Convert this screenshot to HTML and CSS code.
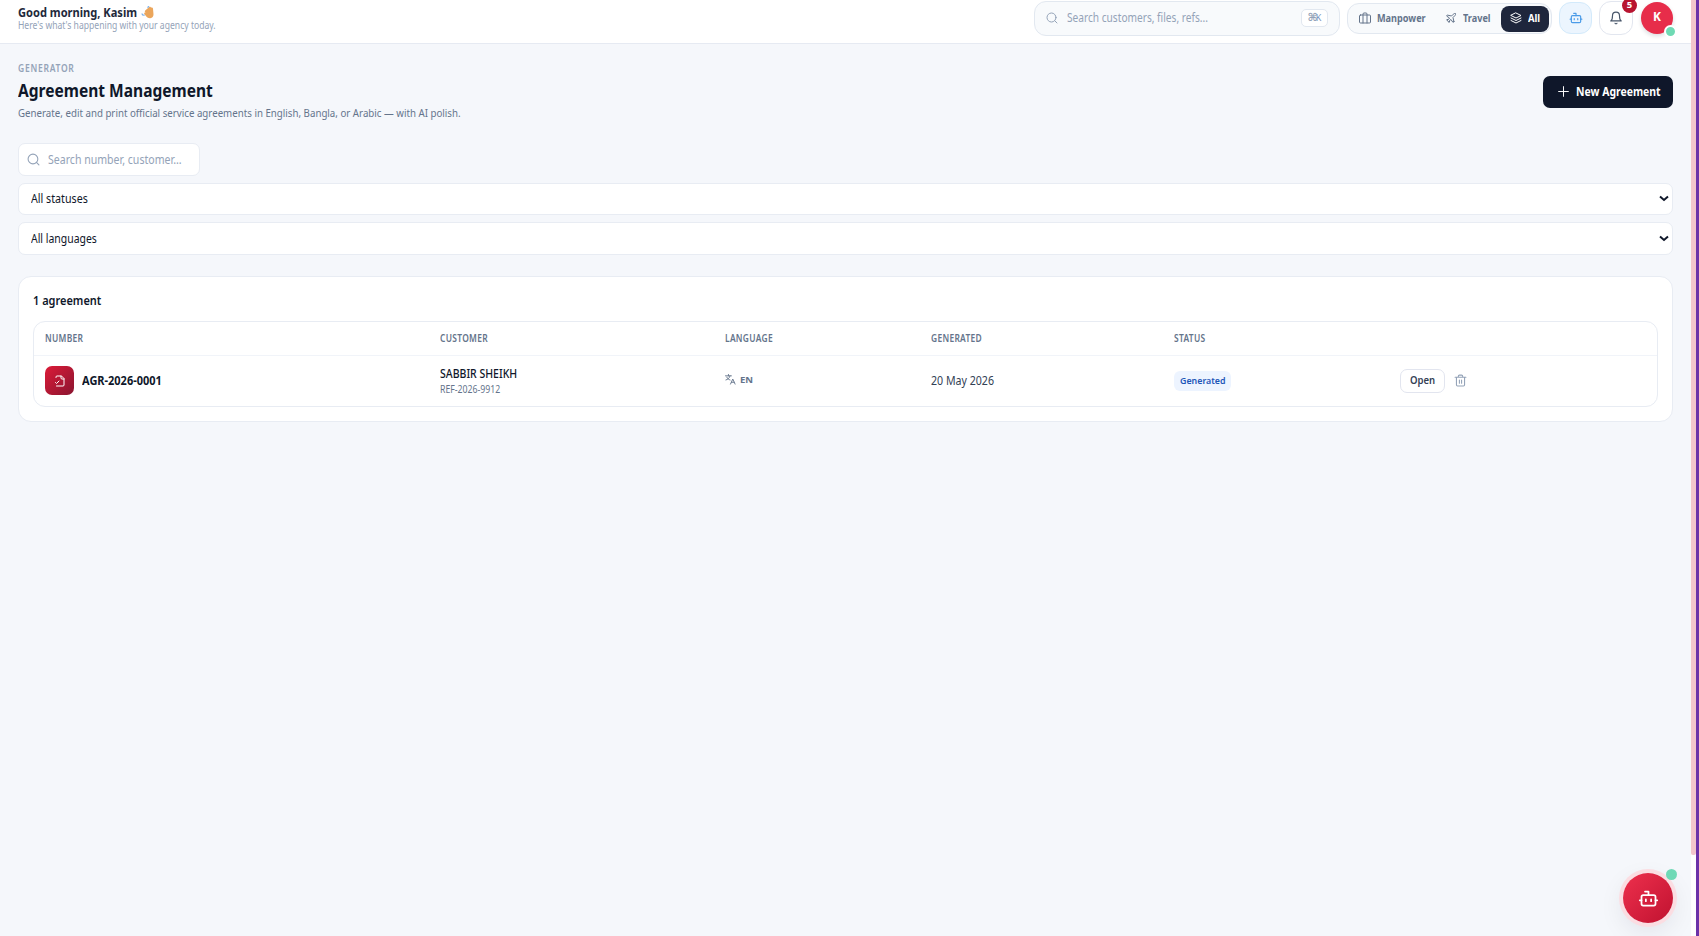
FILE: index.html
```html
<!DOCTYPE html>
<html lang="en">
<head>
<meta charset="utf-8">
<title>Agreement Management</title>
<link rel="stylesheet" href="styles.css">
</head>
<body>
<svg class="defs" width="0" height="0">
  <symbol id="search" viewBox="0 0 24 24"><circle cx="11" cy="11" r="9"/><path d="m22 22-4.500-4.500"/></symbol>
  <symbol id="bot" viewBox="0 0 24 24"><path d="M12 8V4H8"/><rect width="16" height="12" x="4" y="8" rx="2"/><path d="M2 14h2M20 14h2M15 13v2M9 13v2"/></symbol>
</svg>
<div class="app">
  <header class="topbar">
    <div class="greeting">
      <div class="hello"><span class="t hello-text">Good morning, Kasim</span>
        <svg class="wave" viewBox="0 0 13 13"><path d="M4.200 4.500 8.500.8q1.200-.5 1.400.8l1.200-.2q1 .2.9 1.400l.5 5.500q0 3.600-3.200 3.900-2.600.2-4-1.600L3.200 7.800q-.4-1 .6-1.200l.8.2-.9-1.200z" fill="#eba65c"/><path d="M6.500 1.500 8 .4M1 7.500q0 1.500 1.500 2M2.700 8.500l.8 1" stroke="#6fa8e8" stroke-width="1.200" fill="none"/></svg>
      </div>
      <div class="t sub">Here's what's happening with your agency today.</div>
    </div>
    <div class="tools">
      <div class="global-search">
        <svg class="icon"><use href="#search"/></svg>
        <span class="t gs-text">Search customers, files, refs...</span>
        <kbd><span>⌘</span><span class="kbd-k">K</span></kbd>
      </div>
      <div class="segments">
        <div class="seg seg-manpower"><svg class="icon" viewBox="0 0 24 24"><rect x="1" y="6" width="22" height="16" rx="2"/><path d="M8 22V4a2 2 0 0 1 2-2h4a2 2 0 0 1 2 2v18"/></svg><span class="t">Manpower</span></div>
        <div class="seg seg-travel"><svg class="icon" viewBox="0 0 24 24"><path d="M17.800 19.200 16 11l3.500-3.500C21 6 21.500 4 21 3c-1-.5-3 0-4.500 1.500L13 8 4.800 6.200c-.5-.1-.9.1-1.100.5l-.3.5c-.2.5-.1 1 .3 1.300L9 12l-2 3H4l-1 1 3 2 2 3 1-1v-3l3-2 3.500 5.300c.3.4.8.5 1.300.3l.5-.2c.4-.3.6-.7.5-1.200z"/></svg><span class="t">Travel</span></div>
        <div class="seg seg-all"><svg class="icon" viewBox="0 0 24 24"><path d="m12 2 10 5-10 5L2 7z"/><path d="m2 12 10 5 10-5M2 17l10 5 10-5"/></svg><span class="t">All</span></div>
      </div>
      <div class="tool bot"><svg class="icon"><use href="#bot"/></svg></div>
      <div class="tool bell"><svg class="icon" viewBox="0 0 24 24"><path d="M6 8a6 6 0 0 1 12 0c0 7 3 9 3 9H3s3-2 3-9M10.300 21a2 2 0 0 0 3.400 0"/></svg><span class="badge">5</span></div>
      <div class="avatar">K<span class="online"></span></div>
    </div>
  </header>
  <main class="content">
    <section class="page-head">
      <div>
        <div class="t eyebrow">GENERATOR</div>
        <h1 class="t">Agreement Management</h1>
        <p class="t desc">Generate, edit and print official service agreements in English, Bangla, or Arabic — with AI polish.</p>
      </div>
      <div class="new-btn"><svg class="icon" viewBox="0 0 24 24"><path d="M3 12h18M12 3v18"/></svg><span class="t">New Agreement</span></div>
    </section>
    <section class="filters">
      <div class="field search-field"><svg class="icon"><use href="#search"/></svg><span class="t placeholder">Search number, customer...</span></div>
      <div class="field select"><span class="t opt-status">All statuses</span><svg class="chev" viewBox="0 0 10 7"><path d="m1 1.500 4 3.500 4-3.500"/></svg></div>
      <div class="field select tall"><span class="t opt-lang">All languages</span><svg class="chev" viewBox="0 0 10 7"><path d="m1 1.500 4 3.500 4-3.500"/></svg></div>
    </section>
    <section class="card">
      <h2 class="t">1 agreement</h2>
      <div class="table">
        <div class="row head">
          <span class="t">NUMBER</span><span class="t">CUSTOMER</span><span class="t">LANGUAGE</span><span class="t">GENERATED</span><span class="t">STATUS</span><span></span>
        </div>
        <div class="row body">
          <div class="number"><span class="doc"><svg class="icon" viewBox="0 0 24 24"><path d="M4 5V4a2 2 0 0 1 2-2h9l5 5v13a2 2 0 0 1-2 2H5"/><path d="M14 2v4a2 2 0 0 0 2 2h4M3 15l2 2 5-5"/></svg></span><span class="t num-text">AGR-2026-0001</span></div>
          <div class="customer"><div class="t cust-name">SABBIR SHEIKH</div><div class="t cust-ref">REF-2026-9912</div></div>
          <div class="lang"><svg class="icon" viewBox="0 0 24 24"><path d="M1 4h13M7.500 1v3M11 4c-1 5-5 8-9 9M4 7c1 3 4 5 7 6M12 22l5-11 5 11M14 18h6"/></svg><span>EN</span></div>
          <div class="t date">20 May 2026</div>
          <div class="state"><span class="pill"><span class="t">Generated</span></span></div>
          <div class="actions"><span class="open"><span class="t">Open</span></span><svg class="icon trash" viewBox="0 0 24 24"><path d="M2 6h20M19.500 6v14a2 2 0 0 1-2 2h-11a2 2 0 0 1-2-2V6M8 6V4a2 2 0 0 1 2-2h4a2 2 0 0 1 2 2v2M10 11v6M14 11v6"/></svg></div>
        </div>
      </div>
    </section>
  </main>
  <div class="fab"><svg class="icon"><use href="#bot"/></svg><span class="fab-dot"></span></div>
</div>
<div class="scrollbar"><div class="thumb"></div></div>
<div class="edge"></div>
</body>
</html>
```
FILE: styles.css
```css
* { box-sizing: border-box; }
body { margin: 0; height: 936px; display: flex; overflow: hidden; background: #f5f7fb; color: #0f172a; font-family: "Noto Sans", "Open Sans", sans-serif; white-space: nowrap; }
.defs { position: absolute; }
/* Condensed text: --w is the horizontal scale of the run */
.t { display: block; transform: scaleX(var(--w, .87)); transform-origin: 0 50%; }
.icon { display: block; flex: none; fill: none; stroke: currentColor; stroke-width: 2; stroke-linecap: round; stroke-linejoin: round; }
.app { width: 1691px; height: 936px; position: relative; }
.scrollbar { width: 5px; background: #fff; }
.thumb { height: 855px; background: #f3c5cb; border-radius: 0 0 2px 2px; }
.edge { width: 3px; background: #6b32a8; }

.topbar { height: 44px; padding: 0 18px; display: flex; justify-content: space-between; background: #fff; border-bottom: 1px solid #e6eaf2; }
.greeting { padding-top: 5px; }
.hello { display: flex; height: 15px; align-items: center; font-size: 12px; font-weight: 700; color: #1e293b; gap: 4px; line-height: 16px; }
.hello-text { --w: .925; width: 119px; }
.wave { width: 13px; height: 13px; }
.sub { --w: .86; font-size: 10px; line-height: 10px; color: #94a3b8; }
.tools { display: flex; align-items: flex-start; }
.global-search { width: 306px; height: 35px; margin: 1px 7px 0 0; padding: 0 11px 1px 11px; display: flex; align-items: center; border: 1px solid #e2e8f0; border-radius: 12px; background: #f8fafc; color: #94a3b8; font-size: 12px; }
.global-search .icon { width: 12px; height: 12px; margin-right: 9px; }
.gs-text { --w: .845; line-height: 16px; }
kbd { margin-left: auto; width: 27px; height: 18px; display: flex; align-items: center; justify-content: center; border: 1px solid #e2e8f0; border-radius: 5px; background: #fff; font: 700 11px/16px "DejaVu Sans", sans-serif; }
.kbd-k { font: 9px/16px "Noto Sans", sans-serif; margin-left: -2px; color: #7895c0; }
.segments { width: 205px; height: 31px; margin: 3px 7px 0 0; padding: 1px; display: flex; align-items: center; border: 1px solid #e2e8f0; border-radius: 12px; background: #f8fafc; font-size: 10.5px; font-weight: 700; color: #64748b; }
.seg { height: 27px; display: flex; align-items: center; padding: 0 0 1px 10px; gap: 6px; border-radius: 8px; }
.seg .icon { width: 12px; height: 12px; }
.seg-manpower { width: 87px; }
.seg-travel { width: 65px; padding-left: 9px; }
.seg-all { width: 48px; height: 26px; background: #1e263c; color: #fff; padding-left: 9px; }
.seg-all .t { --w: .9; }
.tool { display: flex; align-items: center; justify-content: center; position: relative; border-radius: 12px; }
.tool .icon { width: 14px; height: 14px; }
.bot { width: 33px; height: 32px; margin: 2px 7px 0 0; background: #ecf5fe; border: 1px solid #d3eafb; color: #4a9be8; }
.bell { width: 34px; height: 34px; margin: 1px 8px 0 0; background: #fff; border: 1px solid #e2e6ef; color: #475569; }
.badge { position: absolute; left: 22px; top: -4px; width: 15px; height: 15px; border-radius: 8px; background: #b81430; color: #fff; font-size: 9.500px; font-weight: 700; line-height: 14px; text-align: center; }
.avatar { position: relative; width: 32px; height: 32px; margin-top: 2px; border-radius: 50%; background: #e72d4a; color: #fff; font-size: 12px; line-height: 30px; font-weight: 700; text-align: center; box-shadow: 0 2px 4px #0f172a26; }
.online { position: absolute; left: 23px; top: 23px; width: 13px; height: 13px; border-radius: 50%; border: 2px solid #fff; background: #6fdab4; }

.content { padding: 18px 18px 0; }
.page-head { height: 81px; display: flex; justify-content: space-between; }
.eyebrow { --w: .87; height: 14px; font-size: 9.8px; line-height: 14px; font-weight: 600; color: #94a3b8; letter-spacing: .85px; }
h1 { --w: .888; margin: 0; height: 29px; font-size: 17.5px; line-height: 29px; font-weight: 700; }
.desc { --w: .845; margin: 0; font-size: 11.5px; line-height: 16px; color: #64748b; }
.new-btn { width: 130px; height: 32px; margin-top: 14px; padding: 0 0 1px 14px; display: flex; align-items: center; gap: 6px; background: #0f172a; border-radius: 7px; color: #fff; font-size: 12px; font-weight: 700; }
.new-btn .icon { width: 13px; height: 13px; stroke-width: 1.8; }
.filters { display: flex; flex-direction: column; gap: 7px; }
.field { height: 32px; display: flex; align-items: center; background: #fff; border: 1px solid #e8ecf3; border-radius: 7px; font-size: 12px; }
.search-field { width: 182px; height: 33px; padding: 0 0 1px 8px; color: #94a3b8; }
.search-field .icon { width: 13px; height: 13px; margin-right: 8px; }
.placeholder { --w: .88; }
.select { justify-content: space-between; padding: 0 3px 2px 12px; }
.opt-status { --w: .89; }
.tall { height: 33px; padding-bottom: 1px; }
.chev { width: 10px; height: 7px; fill: none; stroke: #0f172a; stroke-width: 2; }
.card { margin-top: 21px; height: 146px; padding: 14px; background: #fff; border: 1px solid #e8ecf3; border-radius: 13px; }
h2 { --w: .845; margin: 0 0 11px; font-size: 13px; line-height: 19px; font-weight: 600; }
.table { height: 86px; border: 1px solid #e8ecf3; border-radius: 12px; }
.row { display: grid; grid-template-columns: 395px 285px 206px 243px 226px 1fr; padding-left: 11px; align-items: center; }
.head { --w: .86; height: 34px; border-bottom: 1px solid #f1f4f9; font-size: 9.8px; font-weight: 600; color: #64748b; letter-spacing: .35px; }
.body { height: 50px; font-size: 12px; padding-bottom: 1px; }
.number { display: flex; align-items: center; gap: 8px; font-weight: 700; }
.num-text { --w: .915; }
.doc { width: 29px; height: 29px; display: grid; place-items: center; border-radius: 7px; color: #fff; background: linear-gradient(135deg, #dc1b38, #8a1530); }
.doc .icon { width: 12px; height: 12px; }
.cust-name { --w: .875; font-size: 12px; font-weight: 500; line-height: 17px; }
.cust-ref { font-size: 10px; line-height: 14px; color: #64748b; }
.lang { display: flex; align-items: center; gap: 4px; font-size: 9.5px; font-weight: 700; color: #64748b; padding-bottom: 2px; }
.lang .icon { width: 11px; height: 11px; }
.date { --w: .885; color: #334155; }
.pill { --w: .93; display: block; width: 57px; height: 20px; padding-left: 6px; border-radius: 6px; background: #edf4ff; color: #1d56b8; font-size: 9.5px; line-height: 19px; font-weight: 600; }
.actions { display: flex; align-items: center; gap: 9px; }
.open { --w: .91; width: 45px; height: 24px; padding-left: 9px; border: 1px solid #e2e5ef; border-radius: 7px; font-size: 10.5px; line-height: 21px; font-weight: 600; color: #334155; }
.trash { width: 13px; height: 13px; color: #94a3b8; }
.fab { position: absolute; left: 1623px; top: 873px; width: 50px; height: 50px; border-radius: 50%; display: grid; place-items: center; color: #fff; background: linear-gradient(135deg, #ee304d, #c01230); box-shadow: 0 0 0 4px #fbdde2, 0 8px 26px #0f172a18; }
.fab .icon { width: 21px; height: 21px; }
.fab-dot { position: absolute; left: 43px; top: -4px; width: 11px; height: 11px; border-radius: 50%; background: #6fd9b6; }
```
